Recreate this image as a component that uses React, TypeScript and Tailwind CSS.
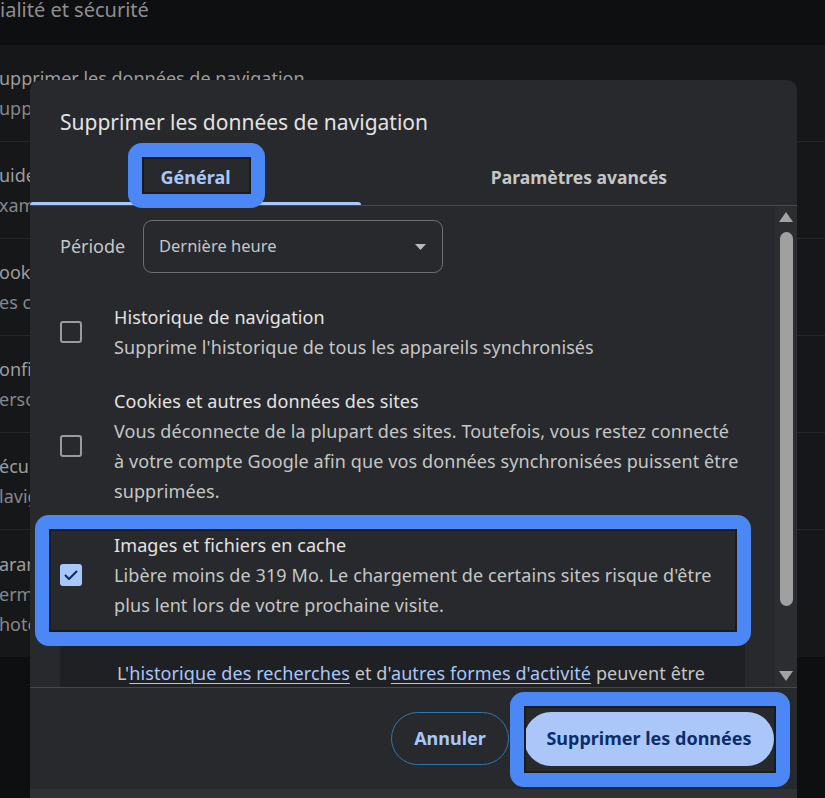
import React from "react";

function Checkbox({ checked }: { checked?: boolean }) {
  if (checked) {
    return (
      <div className="w-[22px] h-[22px] shrink-0 rounded-[3px] bg-[#a8c7fa] flex items-center justify-center">
        <svg width="14" height="11" viewBox="0 0 14 11" fill="none">
          <path d="M1.5 5.5 L5 9 L12.5 1.5" stroke="#0b2a5e" strokeWidth="2" strokeLinecap="round" strokeLinejoin="round" />
        </svg>
      </div>
    );
  }
  return <div className="w-[22px] h-[22px] shrink-0 rounded-[3px] border-2 border-[#9a9b9d]" />;
}

function Item({ title, lines, checked }: { title: string; lines: string[]; checked?: boolean }) {
  return (
    <div className="flex items-center py-[12px]">
      <Checkbox checked={checked} />
      <div className="ml-[32px] text-[18px] tracking-[0.1px] leading-[30px] whitespace-nowrap">
        <div className="text-[#e3e3e3]">{title}</div>
        {lines.map((l, i) => (
          <div key={i} className="text-[#c4c7c5]">
            {l}
          </div>
        ))}
      </div>
    </div>
  );
}

function Annot({ cls }: { cls: string }) {
  return (
    <div className={"absolute rounded-[14px] border-[14px] border-[#4b88f6] " + cls}>
      <div className="absolute inset-0 border-2 border-[#1a1b1d]" />
    </div>
  );
}

function BgRow({ lines, h }: { lines: string[]; h: string }) {
  return (
    <div className={"flex flex-col justify-center border-b border-[#26272a] " + h}>
      {lines.map((l, i) => (
        <div key={i} className={"whitespace-nowrap text-[18px] leading-[30px] -ml-[1px] " + (i === 0 ? "text-[#9c9d9f]" : "text-[#86878a]")}>
          {l}
        </div>
      ))}
    </div>
  );
}

export default function App() {
  return (
    <div className="relative w-[825px] h-[798px] overflow-hidden bg-[#0e0f10] font-['Noto_Sans',sans-serif]">
      {/* background settings page */}
      <div className="h-[45px]">
        <div className="whitespace-nowrap text-[20px] leading-[20px] text-[#8d8e90]">ialité et sécurité</div>
      </div>
      <div className="bg-[#161719] flex flex-col">
        <BgRow h="h-[97px]" lines={["upprimer les données de navigation", "upprimer l'historique, les cookies, vider le cache, etc."]} />
        <BgRow h="h-[97px]" lines={["uide de confidentialité", "xaminez les principaux paramètres"]} />
        <BgRow h="h-[97px]" lines={["ookies tiers", "es cookies tiers sont bloqués"]} />
        <BgRow h="h-[97px]" lines={["onfidentialité des annonces", "ersonnalisez les informations"]} />
        <BgRow h="h-[97px]" lines={["écurité", "lavigation sécurisée"]} />
        <div className="h-[127px] flex flex-col justify-center">
          {["aramètres des sites", "ermissions et informations", "hotos, caméra, micro"].map((l, i) => (
            <div key={i} className={"whitespace-nowrap text-[18px] leading-[30px] -ml-[1px] " + (i === 0 ? "text-[#9c9d9f]" : "text-[#86878a]")}>
              {l}
            </div>
          ))}
        </div>
      </div>

      {/* dialog */}
      <div className="absolute left-[30px] top-[80px] w-[767px] h-[730px] rounded-t-[10px] bg-[#28292c] flex flex-col overflow-hidden">
        <div className="pt-[28px] pl-[30px] text-[21px] leading-[28px] text-[#e3e3e3] whitespace-nowrap">
          Supprimer les données de navigation
        </div>
        <div className="mt-[13px] flex h-[56px]">
          <div className="relative w-[331px] flex items-center justify-center text-[18px] font-bold text-[#a8c7fa]">
            Général
            <div className="absolute left-0 right-0 bottom-0 h-[3px] rounded-t-[3px] bg-[#a8c7fa]" />
          </div>
          <div className="flex-1 flex items-center justify-center text-[17.5px] font-bold text-[#c4c7c5]">
            Paramètres avancés
          </div>
        </div>
        <div className="h-px bg-[#47484b]" />

        <div className="h-[481px] flex overflow-hidden">
          <div className="flex-1 pl-[30px] pr-[30px] flex flex-col">
            <div className="mt-[14px] flex items-center h-[53px] shrink-0">
              <div className="w-[83px] text-[18px] text-[#c4c7c5]">Période</div>
              <div className="w-[300px] h-[53px] border border-[#6e6f72] rounded-[9px] flex items-center justify-between pl-[15px] pr-[16px]">
                <span className="text-[16.5px] text-[#c4c7c5]">Dernière heure</span>
                <svg width="11" height="6" viewBox="0 0 11 6">
                  <path d="M0 0 L11 0 L5.5 6 Z" fill="#b8babc" />
                </svg>
              </div>
            </div>
            <div className="mt-[17px] flex flex-col">
              <Item title="Historique de navigation" lines={["Supprime l'historique de tous les appareils synchronisés"]} />
              <Item
                title="Cookies et autres données des sites"
                lines={[
                  "Vous déconnecte de la plupart des sites. Toutefois, vous restez connecté",
                  "à votre compte Google afin que vos données synchronisées puissent être",
                  "supprimées.",
                ]}
              />
              <Item
                checked
                title="Images et fichiers en cache"
                lines={[
                  "Libère moins de 319 Mo. Le chargement de certains sites risque d'être",
                  "plus lent lors de votre prochaine visite.",
                ]}
              />
            </div>
            <div className="mt-[12px] bg-[#1f2023] pl-[57px] pt-[14px] pb-[14px] text-[18px] tracking-[0.1px] leading-[30px] text-[#c4c7c5] whitespace-nowrap">
              <div>
                L'<span className="text-[#a8c7fa] underline underline-offset-[3px] decoration-1">historique des recherches</span> et d'
                <span className="text-[#a8c7fa] underline underline-offset-[3px] decoration-1">autres formes d'activité</span> peuvent être
              </div>
              <div>enregistrés dans votre compte Google lorsque vous êtes connecté.</div>
            </div>
          </div>
          <div className="w-[22px] bg-[#2c2d30] flex flex-col items-center pt-[6px] pb-[6px]">
            <svg width="14" height="10" viewBox="0 0 14 10">
              <path d="M7 0 L14 10 L0 10 Z" fill="#a3a3a3" />
            </svg>
            <div className="mt-[10px] w-[13px] h-[374px] rounded-full bg-[#a0a0a0]" />
            <div className="flex-1" />
            <svg width="14" height="10" viewBox="0 0 14 10">
              <path d="M0 0 L14 0 L7 10 Z" fill="#a3a3a3" />
            </svg>
          </div>
        </div>

        <div className="h-px bg-[#47484b]" />
        <div className="h-[101px] flex items-center justify-end pr-[23px] gap-[15px]">
          <button className="h-[53px] w-[118px] rounded-full border border-[#2f77b3] text-[18px] font-bold text-[#a8c7fa]">
            Annuler
          </button>
          <button className="h-[54px] w-[250px] rounded-full bg-[#abc7fa] text-[18px] font-bold text-[#0b2e6b]">
            Supprimer les données
          </button>
        </div>
        <div className="flex-1 bg-[#303134]" />
      </div>

      {/* annotations */}
      <Annot cls="left-[128px] top-[143px] w-[137px] h-[65px]" />
      <Annot cls="left-[35px] top-[515px] w-[716px] h-[131px]" />
      <Annot cls="left-[510px] top-[692px] w-[280px] h-[95px]" />
    </div>
  );
}
